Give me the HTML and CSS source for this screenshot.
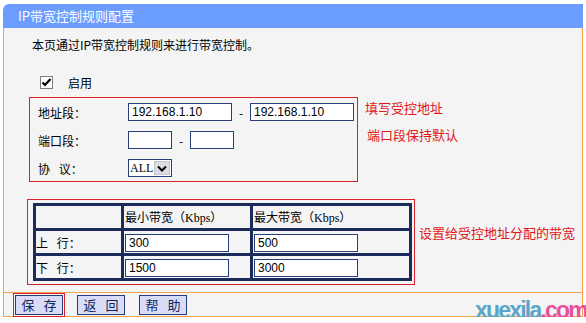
FILE: index.html
```html
<!DOCTYPE html>
<html lang="zh-CN">

<head>
    <meta charset="UTF-8">
    <meta name="viewport" content="width=device-width, initial-scale=1.0">
    <title>IP带宽控制规则配置</title>
    <link rel="stylesheet" href="styles.css">
</head>

<body>
<div class="panel">
    <div class="panel-head">IP带宽控制规则配置</div>

    <div class="panel-body">
        <p class="intro">本页通过IP带宽控制规则来进行带宽控制。</p>

        <!-- Enable -->
        <div class="enable">
            <span class="check">
                <svg width="11" height="11" viewBox="0 0 11 11">
                    <path d="M1.5 5.5 L4 8 L9.5 2" fill="none" stroke="#000" stroke-width="2.2"/>
                </svg>
            </span>
            <span>启用</span>
        </div>

        <!-- Address / port / protocol -->
        <div class="group">
            <div class="mark-box rule-box">
                <div class="field-row">
                    <span class="field-label">地址段：</span>
                    <input class="text-input wide" type="text" value="192.168.1.10">
                    <span class="dash">-</span>
                    <input class="text-input wide" type="text" value="192.168.1.10">
                </div>
                <div class="field-row">
                    <span class="field-label">端口段：</span>
                    <input class="text-input short" type="text" value="">
                    <span class="dash">-</span>
                    <input class="text-input short" type="text" value="">
                </div>
                <div class="field-row">
                    <span class="field-label spaced">协 议：</span>
                    <div class="select">
                        <span class="select-value">ALL</span>
                        <span class="select-arrow">
                            <svg width="10" height="7" viewBox="0 0 10 7">
                                <path d="M1 1.5 L5 5.5 L9 1.5" fill="none" stroke="#000" stroke-width="2"/>
                            </svg>
                        </span>
                    </div>
                </div>
            </div>
            <div class="notes">
                <div class="note">填写受控地址</div>
                <div class="note second">端口段保持默认</div>
            </div>
        </div>

        <!-- Bandwidth table -->
        <div class="group">
            <div class="mark-box table-box">
                <table class="bw-table">
                    <tr>
                        <td class="col-label"></td>
                        <td class="col-min">最小带宽（<span class="unit">Kbps</span>）</td>
                        <td class="col-max">最大带宽（<span class="unit">Kbps</span>）</td>
                    </tr>
                    <tr>
                        <td class="row-label">上 行：</td>
                        <td><input class="text-input wide" type="text" value="300"></td>
                        <td><input class="text-input wide" type="text" value="500"></td>
                    </tr>
                    <tr>
                        <td class="row-label">下 行：</td>
                        <td><input class="text-input wide" type="text" value="1500"></td>
                        <td><input class="text-input wide" type="text" value="3000"></td>
                    </tr>
                </table>
            </div>
            <div class="notes">
                <div class="note table-note">设置给受控地址分配的带宽</div>
            </div>
        </div>
    </div>

    <!-- Buttons -->
    <div class="panel-foot">
        <button class="btn current">保 存</button>
        <button class="btn">返 回</button>
        <button class="btn">帮 助</button>
    </div>

    <div class="watermark">xuexila<span class="dot-com">.com</span></div>
</div>
</body>

</html>
```

FILE: styles.css
```css
* {
    box-sizing: border-box;
}

body {
    margin: 0;
    padding: 0;
    background: #ffffff;
    font-family: "Noto Sans CJK SC", "Liberation Sans", sans-serif;
    font-size: 12px;
    color: #000;
}

.panel {
    position: relative;
    width: 580px;
    margin: 4px 0 0 3px;
}

.panel-head {
    height: 24px;
    line-height: 24px;
    padding-left: 15px;
    font-size: 13px;
    color: #ffffff;
    background-color: #6b9cff;
    border-top-left-radius: 6px;
}

.panel-body {
    background-color: #f4f4f4;
    border-left: 1px solid #f2a24c;
    border-right: 1px solid #f2a24c;
    padding: 9px 0 7px;
}

.intro {
    margin: 0 0 0 28px;
    line-height: 16px;
}

.enable {
    display: flex;
    align-items: center;
    height: 16px;
    margin: 21px 0 0 36px;
}

.check {
    display: flex;
    align-items: center;
    justify-content: center;
    width: 13px;
    height: 13px;
    margin-right: 15px;
    border: 1px solid #7d7d7d;
    background-color: #ffffff;
}

.group {
    display: flex;
    align-items: flex-start;
    margin-top: 7px;
}

.group + .group {
    margin-top: 17px;
}

.mark-box {
    border: 1px solid #d9222a;
}

.rule-box {
    width: 329px;
    margin-left: 25px;
    padding: 5px 1px 4px 8px;
    display: flex;
    flex-direction: column;
    gap: 10px;
}

.field-row {
    display: flex;
    align-items: center;
    height: 18px;
}

.field-row > * {
    flex-shrink: 0;
}

.field-label {
    width: 90px;
}

.field-label.spaced,
.row-label {
    word-spacing: 6px;
}

.text-input {
    height: 18px;
    padding: 0 3px;
    font-family: "Liberation Sans", sans-serif;
    font-size: 12px;
    color: #000;
    background-color: #ffffff;
    border: 1px solid #27407a;
    border-radius: 0;
    outline: none;
}

.text-input.wide {
    width: 104px;
}

.text-input.short {
    width: 44px;
}

.dash {
    width: 18px;
    text-align: center;
}

.select {
    display: flex;
    width: 44px;
    height: 18px;
    border: 1px solid #27407a;
    background-color: #ffffff;
}

.select-value {
    flex: 1;
    padding-left: 1px;
    font-family: "Liberation Serif", serif;
    font-size: 12px;
    line-height: 16px;
}

.select-arrow {
    display: flex;
    align-items: center;
    justify-content: center;
    width: 17px;
    margin: 1px;
    background-color: #dcdde2;
    border: 1px solid #c4c6cf;
}

.notes {
    display: flex;
    flex-direction: column;
}

.note {
    font-size: 13px;
    line-height: 16px;
    color: #e0141c;
    margin: 3px 0 0 7px;
}

.note.second {
    margin: 11px 0 0 9px;
}

.table-box {
    margin-left: 23px;
    padding: 3px 2px 3px 5px;
}

.bw-table {
    width: 379px;
    border-collapse: collapse;
    border: 3px solid #1a2b5c;
}

.bw-table td {
    height: 25px;
    padding: 0 1px;
    border: 3px solid #1a2b5c;
    vertical-align: middle;
}

.bw-table .col-label {
    width: 88px;
}

.bw-table .col-min {
    width: 129px;
}

.bw-table .row-label {
    padding-left: 0;
}

.unit {
    font-family: "Liberation Serif", serif;
    font-size: 12px;
}

.table-note {
    margin: 26px 0 0 4px;
}

.panel-foot {
    display: flex;
    gap: 14px;
    padding: 2px 0 1px 11px;
    background-color: #f4f4f4;
    border: 1px solid #f2a24c;
}

.btn {
    width: 48px;
    height: 20px;
    padding: 0;
    font-family: "Noto Sans CJK SC", sans-serif;
    font-size: 13px;
    line-height: 18px;
    word-spacing: 6px;
    color: #14245a;
    background-color: #d8dcf6;
    border: 1px solid #2a3c78;
    border-radius: 0;
}

.btn.current {
    outline: 1px solid #d9222a;
    outline-offset: 1px;
}

.watermark {
    position: absolute;
    left: 472px;
    top: 295px;
    font-family: "Liberation Sans", sans-serif;
    font-size: 23px;
    font-weight: bold;
    line-height: 23px;
    letter-spacing: -1.8px;
    color: #5aa6c8;
}

.dot-com {
    color: #e8509a;
}
```
